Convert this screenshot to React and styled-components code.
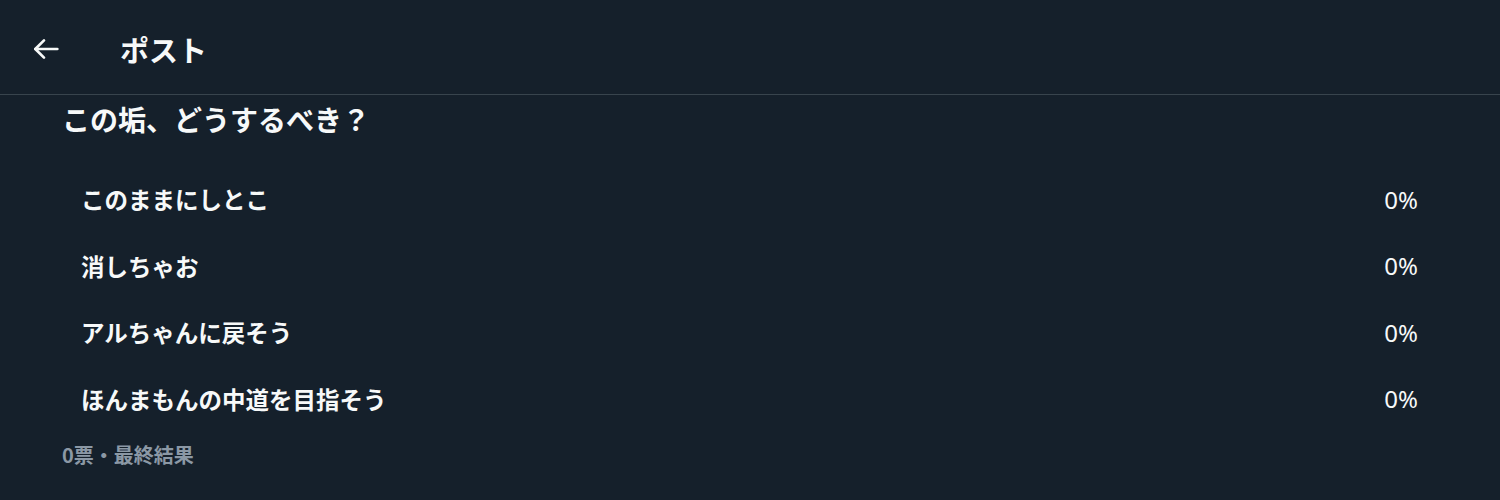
import styled, { createGlobalStyle } from 'styled-components';

const GlobalStyle = createGlobalStyle`
    html, body {
        margin: 0;
        padding: 0;
        background-color: #15202b;
    }
    body {
        font-family: 'Noto Sans CJK JP', 'Noto Sans', sans-serif;
        color: #f7f9f9;
    }
`;

const Page = styled.div`
    width: 1500px;
    height: 500px;
    background-color: #15202b;
    overflow: hidden;
`;

const Header = styled.div`
    display: flex;
    align-items: center;
    height: 95px;
    padding-left: 29px;
    padding-top: 4px;
    border-bottom: 1px solid #38444d;
    box-sizing: border-box;
`;

const BackButton = styled.div`
    display: flex;
    align-items: center;
    justify-content: center;
    width: 34px;
    height: 34px;
    margin-right: 57px;
`;

const Title = styled.h1`
    margin: 0;
    font-size: 29px;
    font-weight: 700;
    line-height: 1;
`;

const Poll = styled.div`
    padding: 0 82px 0 62px;
`;

const Question = styled.div`
    margin-top: 2px;
    font-size: 28px;
    font-weight: 700;
    line-height: 44px;
`;

const Options = styled.div`
    display: flex;
    flex-direction: column;
    margin-top: 25px;
`;

const Option = styled.div`
    display: flex;
    align-items: center;
    justify-content: space-between;
    height: 66.5px;
    padding-left: 19px;
`;

const Label = styled.span`
    font-size: 23.5px;
    font-weight: 700;
`;

const Percent = styled.span`
    font-family: 'Noto Sans', sans-serif;
    font-size: 24px;
    font-weight: 400;
`;

const Footer = styled.div`
    margin-top: 8px;
    font-size: 20px;
    font-weight: 700;
    color: #8b98a5;
`;

const options = ['このままにしとこ', '消しちゃお', 'アルちゃんに戻そう', 'ほんまもんの中道を目指そう'];

export default function App() {
    return (
        <Page>
            <GlobalStyle />
            <Header>
                <BackButton>
                    <svg width="32" height="32" viewBox="0 0 24 24" fill="none" stroke="#f7f9f9" strokeWidth="2" strokeLinecap="round" strokeLinejoin="round">
                        <path d="M20.5 12H4" />
                        <path d="M10.5 5.5L4 12l6.5 6.5" />
                    </svg>
                </BackButton>
                <Title>ポスト</Title>
            </Header>
            <Poll>
                <Question>この垢、どうするべき？</Question>
                <Options>
                    {options.map((o) => (
                        <Option key={o}>
                            <Label>{o}</Label>
                            <Percent>0%</Percent>
                        </Option>
                    ))}
                </Options>
                <Footer>0票・最終結果</Footer>
            </Poll>
        </Page>
    );
}
